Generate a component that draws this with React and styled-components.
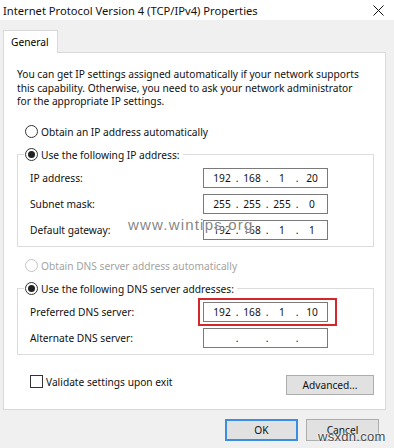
import React from 'react';
import styled, { createGlobalStyle } from 'styled-components';

const GlobalStyle = createGlobalStyle`
  html, body {
    margin: 0;
    padding: 0;
    background: #f0f0f0;
  }
  * {
    box-sizing: border-box;
  }
`;

const FONT = `"Noto Sans", "DejaVu Sans", sans-serif`;

const Window = styled.div`
  position: relative;
  width: 394px;
  height: 448px;
  overflow: hidden;
  background: #f0f0f0;
  font-family: ${FONT};
  font-size: 10.2px;
  color: #000;
`;

const TitleBar = styled.div`
  height: 20px;
  background: #fff;
  display: flex;
  align-items: center;
  justify-content: space-between;
  padding: 0 10px 0 3px;
`;

const Title = styled.span`
  font-size: 11.2px;
  color: #111;
`;

const Body = styled.div`
  padding: 10px 8px 0 3px;
`;

const TabStrip = styled.div`
  display: flex;
`;

const Tab = styled.div`
  position: relative;
  z-index: 1;
  height: 23px;
  margin-bottom: -1px;
  padding: 0 8px 0 7px;
  display: flex;
  align-items: center;
  background: #fff;
  border: 1px solid #d9d9d9;
  border-bottom: none;
`;

const Panel = styled.div`
  background: #fff;
  border: 1px solid #d9d9d9;
  padding: 15px 11px 14px 13px;
`;

const Intro = styled.p`
  margin: 0;
  line-height: 13.5px;
  color: #111;
  white-space: nowrap;
`;

const OptionRow = styled.label`
  display: flex;
  align-items: center;
  gap: 3px;
  height: 14px;
  margin: ${(p) => p.$top}px 0 0 8px;
  color: ${(p) => (p.$disabled ? '#a3a3a3' : '#111')};
`;

const Radio = styled.span`
  position: relative;
  width: 13px;
  height: 13px;
  border-radius: 50%;
  border: 1px solid ${(p) => (p.$disabled ? '#c4c4c4' : '#333')};
  background: #fff;
  flex: none;

  &::after {
    content: '';
    display: ${(p) => (p.$checked ? 'block' : 'none')};
    position: absolute;
    left: 2px;
    top: 2px;
    width: 7px;
    height: 7px;
    border-radius: 50%;
    background: #222;
  }
`;

const Group = styled.fieldset`
  margin: 9px 0 0 0;
  padding: 0 11px 6px 12px;
  border: 1px solid #dcdcdc;
  min-width: 0;
`;

const Legend = styled.legend`
  display: flex;
  align-items: center;
  gap: 3px;
  height: 14px;
  margin-left: -6px;
  padding: 0 3px 0 1px;
  color: #111;
`;

const Rows = styled.div`
  display: grid;
  grid-template-columns: 173px 125px;
  row-gap: 6px;
  padding-top: 6px;
  align-items: center;
`;

const FieldLabel = styled.span`
  color: #111;
`;

const Highlight = styled.div`
  position: relative;

  &::before {
    content: '';
    position: absolute;
    left: -5px;
    right: -9px;
    top: -4px;
    bottom: -4px;
    border: 2px solid #d4262c;
    pointer-events: none;
  }
`;

const IpBox = styled.div`
  height: 20px;
  border: 1px solid #7a7a7a;
  background: #fff;
  display: grid;
  grid-template-columns: 24px 6px 24px 6px 24px 6px 24px;
  align-items: center;
  padding-left: 6px;
  color: #111;
`;

const Octet = styled.span`
  text-align: center;
`;

const Dot = styled.span`
  text-align: center;
`;

const BottomRow = styled.div`
  display: flex;
  justify-content: space-between;
  align-items: flex-start;
  width: 357px;
  margin-top: 20px;
`;

const CheckRow = styled.label`
  display: flex;
  align-items: center;
  gap: 3px;
  margin-left: 13px;
  color: #111;
`;

const CheckBox = styled.span`
  width: 13px;
  height: 13px;
  border: 1px solid #333;
  background: #fff;
`;

const Button = styled.button`
  font-family: ${FONT};
  font-size: 10.2px;
  color: #111;
  width: ${(p) => p.$width}px;
  height: ${(p) => p.$height}px;
  background: #e1e1e1;
  border: ${(p) => (p.$default ? '2px solid #3b8de0' : '1px solid #adadad')};
  padding: 0;
  margin: 0;
`;

const Footer = styled.div`
  display: flex;
  justify-content: flex-end;
  gap: 8px;
  padding: 9px 7px 0 0;
`;

const Watermark = styled.span`
  position: absolute;
  left: ${(p) => p.$x}px;
  top: ${(p) => p.$y}px;
  font-family: "Liberation Sans", Arial, sans-serif;
  font-size: ${(p) => p.$size}px;
  letter-spacing: ${(p) => p.$spacing}px;
  color: ${(p) => p.$color};
  text-shadow: 0 0 2px #fff, 0 0 2px #fff;
  pointer-events: none;
`;

const CloseIcon = () => (
  <svg width="11" height="11" viewBox="0 0 11 11">
    <path d="M0.5 0.5 L10.5 10.5 M10.5 0.5 L0.5 10.5" stroke="#111" strokeWidth="1" />
  </svg>
);

const IpField = ({ value }) => {
  const parts = value.split('.');
  return (
    <IpBox>
      {parts.map((part, i) => (
        <React.Fragment key={i}>
          {i > 0 && <Dot>.</Dot>}
          <Octet>{part}</Octet>
        </React.Fragment>
      ))}
    </IpBox>
  );
};

const ipRows = [
  ['IP address:', '192.168.1.20'],
  ['Subnet mask:', '255.255.255.0'],
  ['Default gateway:', '192.168.1.1'],
];

const App = () => (
  <Window>
    <GlobalStyle />
    <TitleBar>
      <Title>Internet Protocol Version 4 (TCP/IPv4) Properties</Title>
      <CloseIcon />
    </TitleBar>
    <Body>
      <TabStrip>
        <Tab>General</Tab>
      </TabStrip>
      <Panel>
        <Intro>
          You can get IP settings assigned automatically if your network supports<br />
          this capability. Otherwise, you need to ask your network administrator<br />
          for the appropriate IP settings.
        </Intro>

        <OptionRow $top={16}>
          <Radio />
          Obtain an IP address automatically
        </OptionRow>

        <Group>
          <Legend>
            <Radio $checked />
            Use the following IP address:
          </Legend>
          <Rows>
            {ipRows.map(([label, ip]) => (
              <React.Fragment key={label}>
                <FieldLabel>{label}</FieldLabel>
                <IpField value={ip} />
              </React.Fragment>
            ))}
          </Rows>
        </Group>

        <OptionRow $top={12} $disabled>
          <Radio $disabled />
          Obtain DNS server address automatically
        </OptionRow>

        <Group>
          <Legend>
            <Radio $checked />
            Use the following DNS server addresses:
          </Legend>
          <Rows>
            <FieldLabel>Preferred DNS server:</FieldLabel>
            <Highlight>
              <IpField value="192.168.1.10" />
            </Highlight>
            <FieldLabel>Alternate DNS server:</FieldLabel>
            <IpField value="..." />
          </Rows>
        </Group>

        <BottomRow>
          <CheckRow>
            <CheckBox />
            Validate settings upon exit
          </CheckRow>
          <Button $width={88} $height={20}>Advanced...</Button>
        </BottomRow>
      </Panel>
      <Footer>
        <Button $width={73} $height={22} $default>OK</Button>
        <Button $width={73} $height={22}>Cancel</Button>
      </Footer>
    </Body>
    <Watermark $x={128} $y={216} $size={15} $spacing={1.2} $color="rgba(110,110,110,0.85)">
      www.wintips.org
    </Watermark>
    <Watermark $x={318} $y={429} $size={13} $spacing={0.3} $color="#4a4a4a">
      wsxdn.com
    </Watermark>
  </Window>
);

export default App;
